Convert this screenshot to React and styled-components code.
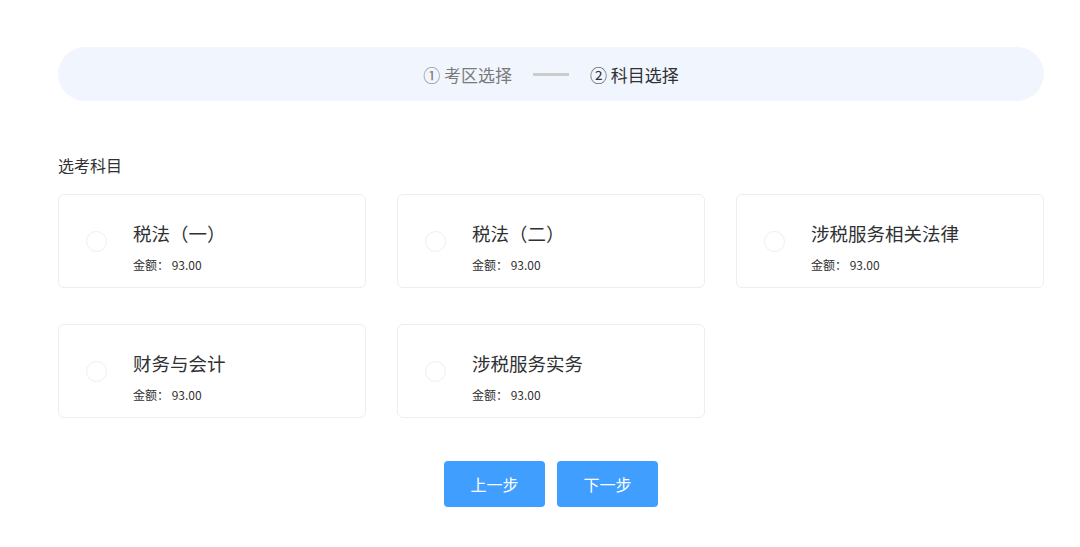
import React, { useState } from 'react';
import styled, { createGlobalStyle } from 'styled-components';

const GlobalStyle = createGlobalStyle`
  html, body {
    margin: 0;
    padding: 0;
    background: #fff;
    font-family: "Noto Sans CJK SC", "Liberation Sans", sans-serif;
    color: #303133;
  }
`;

const SUBJECTS = [
  { id: 1, name: '税法（一）', price: '93.00' },
  { id: 2, name: '税法（二）', price: '93.00' },
  { id: 3, name: '涉税服务相关法律', price: '93.00' },
  { id: 4, name: '财务与会计', price: '93.00' },
  { id: 5, name: '涉税服务实务', price: '93.00' },
];

export default function App() {
  const [checked, setChecked] = useState([]);

  const toggle = (id) => {
    setChecked(checked.includes(id) ? checked.filter((c) => c !== id) : [...checked, id]);
  };

  return (
    <Page>
      <GlobalStyle />
      <StepBar>
        <Step>① 考区选择</Step>
        <StepLine />
        <Step active>② 科目选择</Step>
      </StepBar>

      <SectionTitle>选考科目</SectionTitle>
      <CardGrid>
        {SUBJECTS.map((s) => (
          <Card key={s.id} onClick={() => toggle(s.id)}>
            <Radio checked={checked.includes(s.id)} />
            <CardBody>
              <CardTitle>{s.name}</CardTitle>
              <Price>金额： {s.price}</Price>
            </CardBody>
          </Card>
        ))}
      </CardGrid>

      <ButtonRow>
        <Button>上一步</Button>
        <Button>下一步</Button>
      </ButtonRow>
    </Page>
  );
}

const Page = styled.div`
  width: 986px;
  margin-left: 58px;
  padding-top: 47px;
`;

const StepBar = styled.div`
  height: 54px;
  border-radius: 27px;
  background: #f1f6fe;
  display: flex;
  align-items: center;
  justify-content: center;
  gap: 21px;
`;

const Step = styled.div`
  font-size: 17px;
  color: ${(p) => (p.active ? '#303133' : '#7a7a7a')};
`;

const StepLine = styled.div`
  width: 36px;
  height: 3px;
  background: #cccccc;
`;

const SectionTitle = styled.div`
  margin-top: 53px;
  font-size: 16px;
  line-height: 22px;
  color: #303133;
`;

const CardGrid = styled.div`
  margin-top: 18px;
  display: grid;
  grid-template-columns: repeat(3, 308px);
  column-gap: 31px;
  row-gap: 36px;
`;

const Card = styled.div`
  box-sizing: border-box;
  height: 94px;
  border: 1px solid #ebeef5;
  border-radius: 6px;
  display: flex;
  align-items: center;
  padding-left: 27px;
  cursor: pointer;
`;

const Radio = styled.div`
  box-sizing: border-box;
  width: 21px;
  height: 21px;
  border-radius: 50%;
  border: 1px solid ${(p) => (p.checked ? '#409eff' : '#ebeef5')};
  background: ${(p) => (p.checked ? '#409eff' : '#fff')};
`;

const CardBody = styled.div`
  margin-left: 26px;
  margin-top: 12px;
  display: flex;
  flex-direction: column;
`;

const CardTitle = styled.div`
  font-size: 18.5px;
  line-height: 24px;
  color: #303133;
`;

const Price = styled.div`
  margin-top: 12px;
  font-size: 12px;
  line-height: 16px;
  color: #303133;
`;

const ButtonRow = styled.div`
  margin-top: 43px;
  display: flex;
  justify-content: center;
  gap: 12px;
`;

const Button = styled.button`
  width: 101px;
  height: 46px;
  border: none;
  border-radius: 4px;
  background: #409eff;
  color: #fff;
  font-family: inherit;
  font-size: 16px;
  cursor: pointer;
`;
